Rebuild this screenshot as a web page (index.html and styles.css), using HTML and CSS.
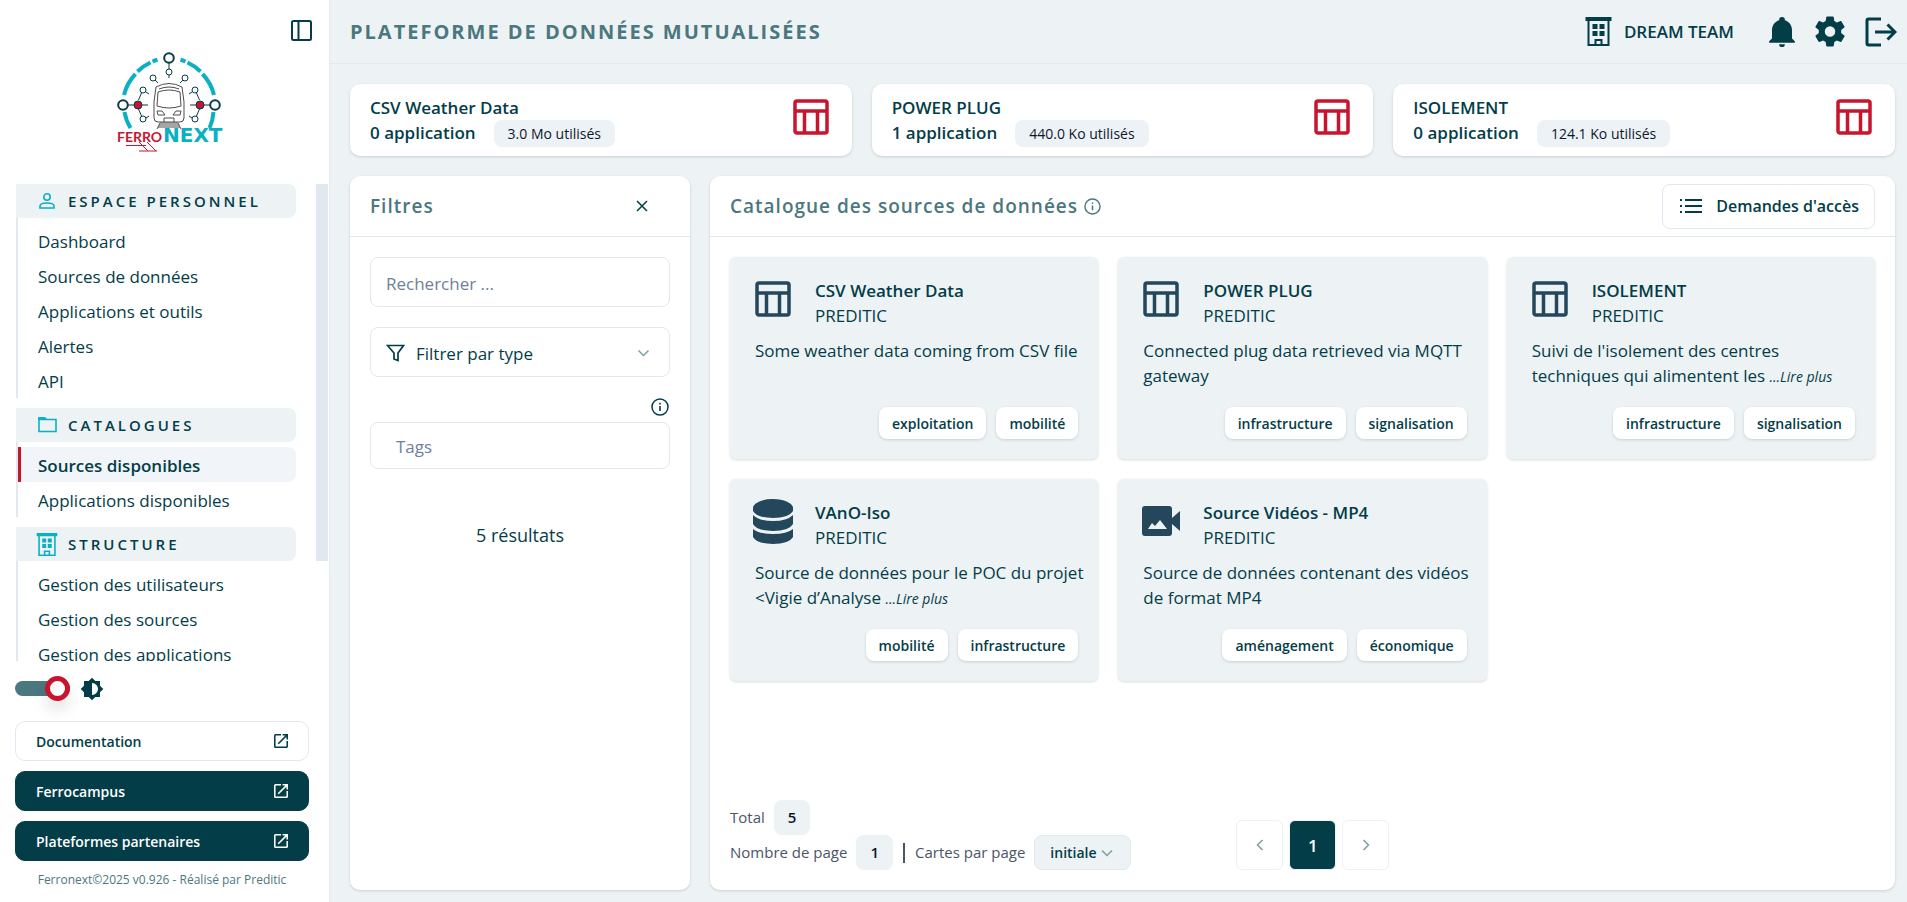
FILE: index.html
```html
<!DOCTYPE html>
<html lang="fr">
<head>
    <meta charset="UTF-8">
    <meta name="viewport" content="width=device-width, initial-scale=1.0">
    <title>Ferronext - Sources de données</title>
    <link rel="stylesheet" href="styles.css">
</head>
<body>
    <!-- Icones partagées -->
    <svg class="sprite" aria-hidden="true">
        <symbol id="i-table" viewBox="0 0 36 36">
            <path d="M4 2h28a2 2 0 0 1 2 2v28a2 2 0 0 1-2 2H4a2 2 0 0 1-2-2V4a2 2 0 0 1 2-2zM2 12h32M11.5 12v22M24.5 12v22" fill="none" stroke="currentColor" stroke-width="3.5"/>
        </symbol>
        <symbol id="i-building" viewBox="0 0 26 29">
            <path fill="currentColor" fill-rule="evenodd" d="M0 0h26v4h-2v25H2V4H0zM4 4v23h5v-5h8v5h5V4zM7 7h5v5H7zM14 7h5v5h-5zM7 14h5v5H7zM14 14h5v5h-5zM11 24v3h4v-3z"/>
        </symbol>
        <symbol id="i-open" viewBox="3 3 18 18">
            <path fill="currentColor" d="M19 19H5V5h7V3H5a2 2 0 0 0-2 2v14a2 2 0 0 0 2 2h14c1.1 0 2-.9 2-2v-7h-2v7zM14 3v2h3.59l-9.83 9.83 1.41 1.41L19 6.41V10h2V3h-7z"/>
        </symbol>
        <symbol id="i-info" viewBox="0 0 18 18">
            <circle cx="9" cy="9" r="8" fill="none" stroke="currentColor" stroke-width="1.5"/>
            <path d="M9 8v5M9 4.8v1.6" stroke="currentColor" stroke-width="1.6"/>
        </symbol>
        <symbol id="i-chevron" viewBox="0 0 12 8">
            <path d="M1 1.5l5 5 5-5" fill="none" stroke="currentColor" stroke-width="1.5"/>
        </symbol>
    </svg>

    <aside class="sidebar">
        <div class="sidebar-top">
            <button class="icon-button" type="button" aria-label="Réduire le menu">
                <svg width="21" height="21" viewBox="0 0 21 21"><path d="M2.5 1h16a1.5 1.5 0 0 1 1.5 1.5v16a1.5 1.5 0 0 1-1.5 1.5h-16a1.5 1.5 0 0 1-1.5-1.5v-16A1.5 1.5 0 0 1 2.5 1zM7.5 1v19" fill="none" stroke="currentColor" stroke-width="2"/></svg>
            </button>
        </div>

        <svg class="logo" width="112" height="100" viewBox="0 0 112 100" role="img" aria-label="Ferronext">
            <g fill="none" stroke="#0bb0c3" stroke-width="4">
                <path d="M7 43A46 46 0 0 1 18.5 22M20.5 19.5A46 46 0 0 1 33.5 10.5M35.5 9.5A46 46 0 0 1 40.5 7.8"/>
                <path d="M97 43A46 46 0 0 0 85.5 22M83.5 19.5A46 46 0 0 0 70.5 10.5M68.5 9.5A46 46 0 0 0 63.5 7.8"/>
                <path d="M7.5 60A46 46 0 0 0 13.5 76M96.5 60A46 46 0 0 1 92.5 76"/>
            </g>
            <g fill="none" stroke="#033d48">
                <circle cx="52" cy="6" r="4.8" stroke-width="2"/>
                <circle cx="6" cy="53" r="4.8" stroke-width="2"/>
                <circle cx="98" cy="53" r="4.8" stroke-width="2"/>
                <circle cx="52" cy="20" r="3"/>
                <circle cx="36" cy="26" r="3"/>
                <circle cx="68" cy="26" r="3"/>
                <circle cx="26" cy="38" r="3"/>
                <circle cx="78" cy="38" r="3"/>
                <circle cx="26" cy="67" r="3"/>
                <circle cx="78" cy="67" r="3"/>
                <path d="M52 11v6M52 23v3M38 28l3 3M66 28l-3 3M24.5 41l-3 7M79.5 41l3 7M29 40l3 2M75 40l-3 2M24.5 64l-3-7M79.5 64l3-7M29 66l3-2M75 66l-3-2M11 53h20M73 53h20"/>
            </g>
            <circle cx="21" cy="53" r="4" fill="#c8152f" stroke="#033d48"/>
            <circle cx="83" cy="53" r="4" fill="#c8152f" stroke="#033d48"/>
            <g fill="none" stroke="#4c4c4c">
                <path d="M39 35q13-7 26 0l2 15v16q0 4-4 4H41q-4 0-4-4V50z"/>
                <path d="M41 40q11-4 22 0l1 14q-12 4-24 0zM42 37q10-4 20 0"/>
                <path d="M40 59h5l3 4h-7zM64 59h-5l-3 4h7zM47 70v-4h10v4M43 71h18M42 73h20M41 75h22M43 71l-3 6M61 71l3 6"/>
            </g>
            <text class="logo-ferro" x="0" y="90">FERRO</text>
            <text class="logo-next" x="46" y="90">NEXT</text>
            <path d="M22 90l9 9M30 90l9 9M9 93.5h20M22 99h18" fill="none" stroke="#c8152f"/>
        </svg>

        <div class="nav-area">
            <nav class="nav">
                <h2 class="nav-title">
                    <svg width="16" height="16" viewBox="0 0 16 16"><circle cx="8" cy="4" r="3.2" fill="none" stroke="currentColor" stroke-width="1.6"/><path d="M1 15v-2q0-3 7-3t7 3v2z" fill="none" stroke="currentColor" stroke-width="1.6"/></svg>
                    ESPACE PERSONNEL
                </h2>
                <ul class="nav-list">
                    <li><a href="#">Dashboard</a></li>
                    <li><a href="#">Sources de données</a></li>
                    <li><a href="#">Applications et outils</a></li>
                    <li><a href="#">Alertes</a></li>
                    <li><a href="#">API</a></li>
                </ul>
                <h2 class="nav-title">
                    <svg width="19" height="16" viewBox="0 0 19 16"><path d="M1 2.5h17v12H1z" fill="none" stroke="currentColor" stroke-width="1.6"/><path d="M0 3V1q0-1 1-1h6l2 2v1H0z" fill="currentColor"/></svg>
                    CATALOGUES
                </h2>
                <ul class="nav-list">
                    <li class="active"><a href="#" aria-current="page">Sources disponibles</a></li>
                    <li><a href="#">Applications disponibles</a></li>
                </ul>
                <h2 class="nav-title">
                    <svg width="22" height="23"><use href="#i-building"/></svg>
                    STRUCTURE
                </h2>
                <ul class="nav-list">
                    <li><a href="#">Gestion des utilisateurs</a></li>
                    <li><a href="#">Gestion des sources</a></li>
                    <li><a href="#">Gestion des applications</a></li>
                </ul>
            </nav>
            <div class="scrollbar"></div>
        </div>

        <div class="sidebar-bottom">
            <div class="theme">
                <input class="switch" type="checkbox" id="theme" aria-label="Thème clair" checked>
                <label for="theme" aria-label="Thème clair">
                    <svg width="24" height="24" viewBox="0 0 24 24"><path fill="currentColor" fill-rule="evenodd" d="M12 18V6a6 6 0 0 1 0 12M20 15.31L23.31 12 20 8.69V4h-4.69L12 .69 8.69 4H4v4.69L.69 12 4 15.31V20h4.69L12 23.31 15.31 20H20z"/></svg>
                </label>
            </div>
            <a class="side-link light" href="#">Documentation <svg width="14" height="14"><use href="#i-open"/></svg></a>
            <a class="side-link" href="#">Ferrocampus <svg width="14" height="14"><use href="#i-open"/></svg></a>
            <a class="side-link" href="#">Plateformes partenaires <svg width="14" height="14"><use href="#i-open"/></svg></a>
            <p class="credits">Ferronext©2025 v0.926 - Réalisé par Preditic</p>
        </div>
    </aside>

    <div class="page">
        <header class="header">
            <h1>PLATEFORME DE DONNÉES MUTUALISÉES</h1>
            <div class="header-right">
                <a class="team" href="#"><svg width="27" height="29"><use href="#i-building"/></svg>DREAM TEAM</a>
                <button class="icon-button" type="button" aria-label="Notifications">
                    <svg width="26" height="30" viewBox="3 2 18 21"><path fill="currentColor" d="M21 19v1H3v-1l2-2v-6c0-3.1 2.03-5.83 5-6.71V4a2 2 0 0 1 4 0v.29c2.97.88 5 3.61 5 6.71v6l2 2M14 21a2 2 0 0 1-4 0"/></svg>
                </button>
                <button class="icon-button" type="button" aria-label="Paramètres">
                    <svg width="30" height="31" viewBox="2 2 20 20"><path fill="currentColor" d="M12,15.5A3.5,3.5 0 0,1 8.5,12A3.5,3.5 0 0,1 12,8.5A3.5,3.5 0 0,1 15.5,12A3.5,3.5 0 0,1 12,15.5M19.43,12.97C19.47,12.65 19.5,12.33 19.5,12C19.5,11.67 19.47,11.34 19.43,11L21.54,9.37C21.73,9.22 21.78,8.95 21.66,8.73L19.66,5.27C19.54,5.05 19.27,4.96 19.05,5.05L16.56,6.05C16.04,5.66 15.5,5.32 14.87,5.07L14.5,2.42C14.46,2.18 14.25,2 14,2H10C9.75,2 9.54,2.18 9.5,2.42L9.13,5.07C8.5,5.32 7.96,5.66 7.44,6.05L4.95,5.05C4.73,4.96 4.46,5.05 4.34,5.27L2.34,8.73C2.21,8.95 2.27,9.22 2.46,9.37L4.57,11C4.53,11.34 4.5,11.67 4.5,12C4.5,12.33 4.53,12.65 4.57,12.97L2.46,14.63C2.27,14.78 2.21,15.05 2.34,15.27L4.34,18.73C4.46,18.95 4.73,19.03 4.95,18.95L7.44,17.94C7.96,18.34 8.5,18.68 9.13,18.93L9.5,21.58C9.54,21.82 9.75,22 10,22H14C14.25,22 14.46,21.82 14.5,21.58L14.87,18.93C15.5,18.67 16.04,18.34 16.56,17.94L19.05,18.95C19.27,19.03 19.54,18.95 19.66,18.73L21.66,15.27C21.78,15.05 21.73,14.78 21.54,14.63L19.43,12.97Z"/></svg>
                </button>
                <button class="icon-button" type="button" aria-label="Déconnexion">
                    <svg width="32" height="30" viewBox="0 0 32 30"><path d="M16 2H3.5Q2 2 2 3.5v23Q2 28 3.5 28H16M10 15h20M22.5 7.5L30 15l-7.5 7.5" fill="none" stroke="currentColor" stroke-width="3"/></svg>
                </button>
            </div>
        </header>

        <main class="content">
            <section class="stats">
                <article class="stat">
                    <div>
                        <h3>CSV Weather Data</h3>
                        <p>0 application <span class="usage">3.0 Mo utilisés</span></p>
                    </div>
                    <svg width="36" height="36"><use href="#i-table"/></svg>
                </article>
                <article class="stat">
                    <div>
                        <h3>POWER PLUG</h3>
                        <p>1 application <span class="usage">440.0 Ko utilisés</span></p>
                    </div>
                    <svg width="36" height="36"><use href="#i-table"/></svg>
                </article>
                <article class="stat">
                    <div>
                        <h3>ISOLEMENT</h3>
                        <p>0 application <span class="usage">124.1 Ko utilisés</span></p>
                    </div>
                    <svg width="36" height="36"><use href="#i-table"/></svg>
                </article>
            </section>

            <div class="columns">
                <section class="panel filters">
                    <div class="panel-head">
                        <h2>Filtres</h2>
                        <button class="icon-button close" type="button" aria-label="Fermer">
                            <svg width="12" height="12" viewBox="0 0 12 12"><path d="M1 1l10 10M11 1L1 11" stroke="currentColor" stroke-width="1.5"/></svg>
                        </button>
                    </div>
                    <form class="filter-form">
                        <input class="field" type="text" placeholder="Rechercher ..." aria-label="Rechercher">
                        <div class="field select-field">
                            <svg width="19" height="18" viewBox="0 0 18 18"><path d="M1 1.5h16l-5.5 7.5v7.5L7.5 15V9z" fill="none" stroke="currentColor" stroke-width="1.7"/></svg>
                            <select aria-label="Filtrer par type">
                                <option>Filtrer par type</option>
                            </select>
                            <svg class="chevron" width="13" height="8"><use href="#i-chevron"/></svg>
                        </div>
                        <div class="tags-field">
                            <svg width="18" height="18"><use href="#i-info"/></svg>
                            <input class="field" type="text" placeholder="Tags" aria-label="Tags">
                        </div>
                        <p class="results">5 résultats</p>
                    </form>
                </section>

                <section class="panel catalogue">
                    <div class="panel-head">
                        <h2>Catalogue des sources de données <svg width="17" height="17"><use href="#i-info"/></svg></h2>
                        <button class="requests" type="button">
                            <svg width="22" height="16" viewBox="0 0 22 16"><path d="M5 2h17M5 8h17M5 14h17M0 2h2M0 8h2M0 14h2" stroke="currentColor" stroke-width="1.8"/></svg>
                            Demandes d'accès
                        </button>
                    </div>

                    <div class="cards">
                        <article class="card">
                            <div class="card-head">
                                <svg class="card-icon" width="36" height="36"><use href="#i-table"/></svg>
                                <div><h3>CSV Weather Data</h3><p>PREDITIC</p></div>
                            </div>
                            <p class="desc">Some weather data coming from CSV file</p>
                            <div class="tags"><span>exploitation</span><span>mobilité</span></div>
                        </article>
                        <article class="card">
                            <div class="card-head">
                                <svg class="card-icon" width="36" height="36"><use href="#i-table"/></svg>
                                <div><h3>POWER PLUG</h3><p>PREDITIC</p></div>
                            </div>
                            <p class="desc">Connected plug data retrieved via MQTT gateway</p>
                            <div class="tags"><span>infrastructure</span><span>signalisation</span></div>
                        </article>
                        <article class="card">
                            <div class="card-head">
                                <svg class="card-icon" width="36" height="36"><use href="#i-table"/></svg>
                                <div><h3>ISOLEMENT</h3><p>PREDITIC</p></div>
                            </div>
                            <p class="desc">Suivi de l'isolement des centres techniques qui alimentent les <a href="#">...Lire plus</a></p>
                            <div class="tags"><span>infrastructure</span><span>signalisation</span></div>
                        </article>
                        <article class="card">
                            <div class="card-head">
                                <svg class="card-icon" width="40" height="45" viewBox="0 0 40 45"><ellipse cx="20" cy="9" rx="20" ry="9" fill="currentColor"/><path fill="currentColor" d="M0 9h40v3q-4 7-20 7T0 12zM0 16q6 6 20 6t20-6v9q-4 7-20 7T0 25zM0 30q6 5 20 5t20-5v8q-4 7-20 7T0 38z"/></svg>
                                <div><h3>VAnO-Iso</h3><p>PREDITIC</p></div>
                            </div>
                            <p class="desc">Source de données pour le POC du projet &lt;Vigie d’Analyse <a href="#">...Lire plus</a></p>
                            <div class="tags"><span>mobilité</span><span>infrastructure</span></div>
                        </article>
                        <article class="card">
                            <div class="card-head">
                                <svg class="card-icon" width="38" height="30" viewBox="0 0 38 30"><path fill="currentColor" fill-rule="evenodd" d="M3 0h24q3 0 3 3v9l8-7v20l-8-7v9q0 3-3 3H3q-3 0-3-3V3q0-3 3-3zM6 23h19l-7-9-5 6-3-3z"/></svg>
                                <div><h3>Source Vidéos - MP4</h3><p>PREDITIC</p></div>
                            </div>
                            <p class="desc">Source de données contenant des vidéos de format MP4</p>
                            <div class="tags"><span>aménagement</span><span>économique</span></div>
                        </article>
                    </div>

                    <footer class="pager">
                        <div class="pager-info">
                            <div class="pager-row">Total <b>5</b></div>
                            <div class="pager-row">
                                Nombre de page <b>1</b>
                                <i></i>
                                <label for="per-page">Cartes par page</label>
                                <div class="per-page">
                                    <select id="per-page">
                                        <option>initiale</option>
                                    </select>
                                    <svg class="chevron" width="12" height="8"><use href="#i-chevron"/></svg>
                                </div>
                            </div>
                        </div>
                        <div class="pages">
                            <button type="button" aria-label="Page précédente"><svg width="8" height="12" viewBox="0 0 8 12"><path d="M6.5 1l-5 5 5 5" fill="none" stroke="currentColor" stroke-width="1.5"/></svg></button>
                            <button type="button" class="current">1</button>
                            <button type="button" aria-label="Page suivante"><svg width="8" height="12" viewBox="0 0 8 12"><path d="M1.5 1l5 5-5 5" fill="none" stroke="currentColor" stroke-width="1.5"/></svg></button>
                        </div>
                    </footer>
                </section>
            </div>
        </main>
    </div>
</body>
</html>
```
FILE: styles.css
```css
* {
    box-sizing: border-box;
}
body {
    margin: 0;
    height: 100vh;
    display: flex;
    font-family: "Open Sans", "Noto Sans", sans-serif;
    font-size: 17px;
    line-height: 25px;
    color: #033d48;
    background-color: #edf2f5;
}
h1, h2, h3, p, ul {
    margin: 0;
    padding: 0;
}
a {
    color: inherit;
    text-decoration: none;
}
svg {
    flex-shrink: 0;
}
button, input, select {
    font: inherit;
    color: inherit;
}
button {
    cursor: pointer;
}
.sprite {
    display: none;
}
.icon-button {
    display: flex;
    padding: 0;
    border: none;
    background: none;
}

/* Menu lateral */
.sidebar {
    width: 330px;
    flex-shrink: 0;
    display: flex;
    flex-direction: column;
    background-color: white;
    border-right: 1px solid #e2e8f0;
}
.sidebar-top {
    display: flex;
    justify-content: flex-end;
    padding: 20px 17px 11px;
}
.logo {
    margin: 0 auto 32px 117px;
    overflow: visible;
}
.logo-ferro {
    font-family: Lato, sans-serif;
    font-size: 14px;
    font-weight: bold;
    fill: #c8152f;
}
.logo-next {
    font-family: "DejaVu Sans", sans-serif;
    font-size: 20px;
    font-weight: bold;
    fill: #0bb0c3;
}
.nav-area {
    flex: 1;
    min-height: 0;
    display: flex;
    justify-content: space-between;
    padding: 0 1px 0 16px;
}
.nav {
    width: 280px;
    overflow-y: auto;
    scrollbar-width: none;
}
.scrollbar {
    width: 12px;
    height: 79%;
    background-color: #e2e8f0;
}
.nav-title {
    display: grid;
    grid-template-columns: 22px 1fr;
    align-items: center;
    gap: 10px;
    height: 34px;
    padding-left: 20px;
    border-radius: 0 8px 8px 0;
    background-color: #edf2f5;
    font-size: 15px;
    font-weight: 600;
    letter-spacing: 3px;
}
.nav-title svg {
    justify-self: center;
    color: #0bb0c3;
}
.nav-list {
    list-style: none;
    margin-bottom: 10px;
    padding-top: 5px;
    border-left: 2px solid #e2e8f0;
}
.nav-list li {
    height: 35px;
    padding-left: 20px;
    line-height: 37px;
}
.nav-list .active {
    padding-left: 17px;
    border-left: 3px solid #c8152f;
    border-radius: 0 8px 8px 0;
    background-color: #f1f5f9;
    font-weight: 600;
}
.sidebar-bottom {
    display: flex;
    flex-direction: column;
    gap: 10px;
    padding: 15px 20px 13px 15px;
}
.theme {
    display: flex;
    align-items: center;
    gap: 10px;
    height: 25px;
    margin-bottom: 10px;
}
.theme label {
    display: flex;
}
.switch {
    appearance: none;
    display: flex;
    align-items: center;
    justify-content: flex-end;
    width: 55px;
    height: 15px;
    margin: 0;
    border-radius: 8px;
    background-color: #4b777e;
}
.switch::after {
    content: "";
    width: 25px;
    height: 25px;
    box-sizing: border-box;
    border: 5px solid #c8152f;
    border-radius: 50%;
    background-color: white;
    box-shadow: 0 10px 15px rgba(0, 0, 0, 0.1);
}
.side-link {
    display: flex;
    align-items: center;
    justify-content: space-between;
    height: 40px;
    padding: 0 20px;
    border: 1px solid #033d48;
    border-radius: 10px;
    background-color: #033d48;
    color: white;
    font-size: 14px;
    font-weight: 600;
}
.side-link.light {
    border-color: #e2e8f0;
    background-color: white;
    color: #033d48;
}
.credits {
    font-size: 12px;
    line-height: 18px;
    text-align: center;
    color: #4b777e;
}

/* Entete */
.page {
    flex: 1;
    min-width: 0;
    display: flex;
    flex-direction: column;
}
.header {
    display: flex;
    align-items: center;
    justify-content: space-between;
    height: 64px;
    padding: 0 10px 0 20px;
    border-bottom: 1px solid #e2e8f0;
}
.header h1 {
    font-size: 20px;
    letter-spacing: 2px;
    color: #4b777e;
}
.header-right {
    display: flex;
    align-items: center;
    gap: 20px;
}
.team {
    display: flex;
    align-items: center;
    gap: 12px;
    margin-right: 15px;
    font-weight: 600;
}

/* Contenu */
.content {
    flex: 1;
    min-height: 0;
    display: flex;
    flex-direction: column;
    gap: 20px;
    padding: 20px 12px 12px 20px;
}
.stats {
    display: grid;
    grid-template-columns: repeat(3, 1fr);
    gap: 20px;
}
.stat {
    display: flex;
    justify-content: space-between;
    padding: 11px 23px 11px 20px;
    border-radius: 10px;
    background-color: white;
    box-shadow: 0 1px 3px rgba(0, 0, 0, 0.15);
}
.stat h3, .stat p {
    font-size: 17px;
    font-weight: 600;
}
.stat p {
    display: flex;
    gap: 18px;
    height: 25px;
}
.stat svg {
    margin-top: 4px;
    color: #c8152f;
}
.usage {
    height: 27px;
    padding: 0 14px;
    border-radius: 8px;
    background-color: #edf2f7;
    color: #0f172a;
    font-size: 14px;
    font-weight: 500;
    line-height: 27px;
}
.columns {
    flex: 1;
    min-height: 0;
    display: flex;
    gap: 20px;
}
.panel {
    display: flex;
    flex-direction: column;
    border-radius: 10px;
    background-color: white;
    box-shadow: 0 1px 3px rgba(0, 0, 0, 0.15);
}
.panel-head {
    display: flex;
    align-items: center;
    justify-content: space-between;
    height: 61px;
    padding: 0 20px;
    border-bottom: 1px solid #e2e8f0;
}
.panel-head h2 {
    display: flex;
    align-items: center;
    gap: 6px;
    font-size: 19px;
    font-weight: 600;
    letter-spacing: 1px;
    color: #4b777e;
}
.close {
    padding: 0 22px;
}
.filters {
    width: 340px;
    flex-shrink: 0;
}
.filter-form {
    display: flex;
    flex-direction: column;
    gap: 20px;
    padding: 20px;
}
.field {
    width: 100%;
    height: 50px;
    padding: 2px 15px 0;
    border: 1px solid #e2e8f0;
    border-radius: 8px;
    background-color: white;
    outline: none;
}
.field::placeholder {
    color: #718096;
}
.select-field {
    display: flex;
    align-items: center;
    gap: 11px;
    padding-right: 19px;
}
.select-field select {
    flex: 1;
    padding: 0;
    border: none;
    background: none;
    appearance: none;
}
.chevron {
    color: #7f9ca3;
}
.tags-field {
    display: flex;
    flex-direction: column;
    align-items: flex-end;
    gap: 6px;
}
.tags-field svg {
    margin: 1px 1px 0 0;
}
.tags-field .field {
    height: 47px;
    padding-left: 25px;
}
.results {
    margin-top: 34px;
    font-size: 18px;
    text-align: center;
}
.catalogue {
    flex: 1;
    min-width: 0;
}
.requests {
    display: flex;
    align-items: center;
    gap: 14px;
    height: 45px;
    padding: 0 15px 0 17px;
    border: 1px solid #e2e8f0;
    border-radius: 8px;
    background-color: white;
    font-size: 16px;
    font-weight: 600;
}
.cards {
    flex: 1;
    display: grid;
    grid-template-columns: repeat(3, 1fr);
    align-content: start;
    gap: 20px;
    padding: 20px;
}
.card {
    display: flex;
    flex-direction: column;
    min-height: 202px;
    padding: 21px 10px 20px 20px;
    border-radius: 6px;
    background-color: #edf2f5;
    box-shadow: 0 1px 3px rgba(0, 0, 0, 0.15);
}
.card-head {
    display: grid;
    grid-template: 50px / 46px 1fr;
    align-items: center;
    gap: 19px;
    margin-bottom: 10px;
}
.card-icon {
    justify-self: center;
    margin-bottom: 8px;
    color: #25475c;
}
.card h3 {
    font-size: 17px;
    font-weight: 600;
}
.desc {
    padding-left: 5px;
}
.desc a {
    font-size: 14px;
    font-style: italic;
}
.tags {
    display: flex;
    justify-content: flex-end;
    gap: 10px;
    margin-top: auto;
    padding-right: 10px;
}
.tags span {
    height: 32px;
    padding: 0 13px;
    border-radius: 8px;
    background-color: white;
    box-shadow: 0 1px 3px rgba(0, 0, 0, 0.15);
    font-size: 14px;
    font-weight: 600;
    line-height: 33px;
}

/* Pagination */
.pager {
    display: flex;
    align-items: flex-end;
    gap: 105px;
    padding: 20px;
    font-size: 15px;
    color: #4a5568;
}
.pager-row {
    display: flex;
    align-items: center;
    gap: 9px;
}
.pager-row b {
    padding: 0 14px;
    border-radius: 8px;
    background-color: #edf2f5;
    color: #0f172a;
    font-weight: 600;
    line-height: 35px;
}
.pager-row i {
    width: 2px;
    height: 20px;
    margin: 0 1px;
    background-color: #4a5568;
}
.per-page {
    display: flex;
    align-items: center;
    gap: 4px;
    height: 35px;
    padding: 0 17px 0 15px;
    border: 1px solid #e2e8f0;
    border-radius: 8px;
    background-color: #edf2f5;
}
.per-page select {
    padding: 0;
    border: none;
    background: none;
    appearance: none;
    color: #033d48;
    font-size: 14px;
    font-weight: 600;
}
.pages {
    display: flex;
    gap: 6px;
}
.pages button {
    display: flex;
    align-items: center;
    justify-content: center;
    width: 47px;
    height: 50px;
    border: 1px solid #edf2f5;
    border-radius: 6px;
    background-color: white;
    color: #7f9ca3;
}
.pages .current {
    background-color: #033d48;
    color: white;
    font-size: 17px;
    font-weight: 600;
}
```
